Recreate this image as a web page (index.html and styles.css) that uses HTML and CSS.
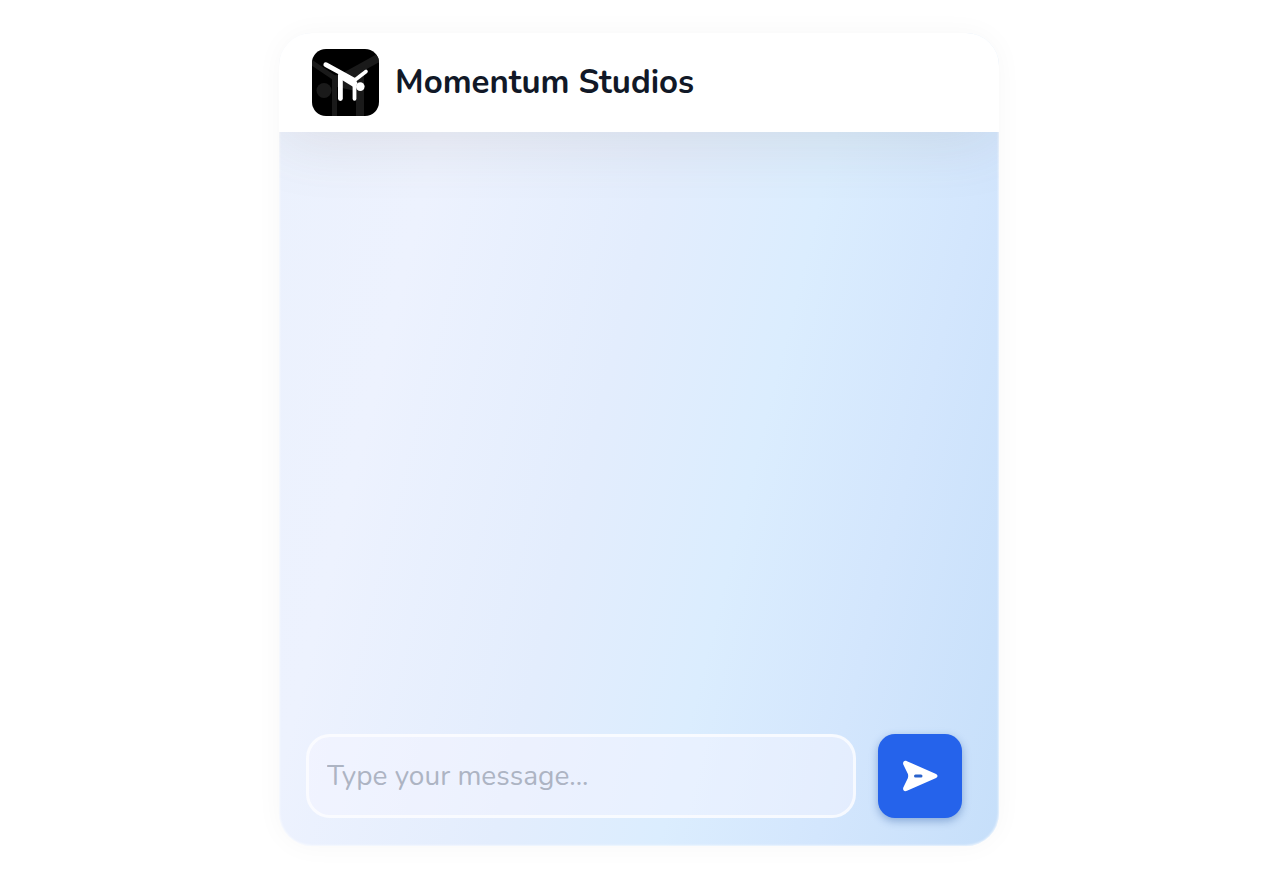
FILE: index.html
```html
<!DOCTYPE html>
<html lang="en">
<head>
<meta charset="utf-8">
<meta name="viewport" content="width=device-width, initial-scale=1">
<title>Momentum Studios</title>
<link rel="stylesheet" href="styles.css">
</head>
<body class="page">
<main class="chat">
  <header class="chat-header">
    <svg class="logo" viewBox="0 0 67 67" role="img" aria-label="Momentum Studios logo">
      <rect width="67" height="67" fill="#000"/>
      <g fill="none" stroke="#1a1a1a">
        <path d="M-2 12.500 L22.500 29 V69" stroke-width="5"/>
        <path d="M70 7 L30 29" stroke-width="8"/>
        <path d="M48 26 V69" stroke-width="8"/>
      </g>
      <path d="M20 27 L30 25 L50 18 L52 38 L44 42 L25 38Z" fill="#1a1a1a"/>
      <circle cx="12" cy="41.500" r="7.500" fill="#1a1a1a"/>
      <g fill="none" stroke="#fff" stroke-linecap="round" stroke-linejoin="round">
        <path d="M13.800 15.700 L42 31" stroke-width="4.800"/>
        <path d="M41 32.500 L54 22.500" stroke-width="3.600"/>
        <path d="M28.400 26 V49.500" stroke-width="4.800"/>
        <path d="M42.500 34 V49.800" stroke-width="3.800"/>
      </g>
      <path d="M26 22 L43 30 L45.500 34 L43 39 L30 31Z" fill="#fff"/>
      <circle cx="48.300" cy="37.600" r="4.300" fill="#fff"/>
    </svg>
    <h1 class="title">Momentum Studios</h1>
  </header>
  <section class="messages" aria-label="Messages"></section>
  <form class="composer">
    <input class="message-input" type="text" aria-label="Message" placeholder="Type your message...">
    <button class="send" type="button" aria-label="Send message">
      <svg class="send-icon" viewBox="0 0 36 32" aria-hidden="true">
        <path d="M1.300 4.500 C.4 1.500 2.500 0 5 1.200 L33.500 13.700 C36.200 15 36.200 17 33.500 18.300 L5 30.800 C2.500 32 .4 30.500 1.300 27.500 L5.800 18.200 Q6.600 16 5.800 13.800Z" fill="#fff"/>
        <path d="M13.500 16 H19" fill="none" stroke="#2a62cc" stroke-width="3" stroke-linecap="round"/>
      </svg>
    </button>
  </form>
</main>
</body>
</html>
```
FILE: styles.css
```css
* {
  box-sizing: border-box;
}

.page {
  margin: 0;
  min-height: 100vh;
  padding: 33px 24px 34px;
  display: flex;
  justify-content: center;
  background: #fff;
  font-family: Nunito, Lato, "Open Sans", sans-serif;
}

.chat {
  width: 100%;
  max-width: 720px;
  display: flex;
  flex-direction: column;
  overflow: hidden;
  border-radius: 33px;
  background: linear-gradient(104deg, #ebf1fd 0%, #edf2fe 20%, #e3edfd 45%, #dbedfe 63%, #d3e6fd 80%, #c6dffa 100%);
  box-shadow: inset 0 0 2px 1px rgba(255, 255, 255, 0.6), 0 0 28px rgba(0, 0, 0, 0.035);
}

.chat-header {
  display: flex;
  align-items: center;
  gap: 16px;
  padding: 16px 33px;
  background: #fff;
  box-shadow: 0 8px 64px rgba(110, 90, 70, 0.13);
}

.logo {
  width: 67px;
  height: 67px;
  flex: none;
  border-radius: 14px;
}

.title {
  margin: 0;
  color: #111827;
  font-size: 33px;
  line-height: 48px;
  font-weight: 700;
}

.messages {
  flex: 1;
}

.composer {
  display: flex;
  gap: 22px;
  padding: 24px 37px 28px 27px;
}

.message-input {
  flex: 1;
  min-width: 0;
  height: 84px;
  padding: 0 18px;
  border: 3px solid rgba(255, 255, 255, 0.7);
  border-radius: 24px;
  background: rgba(245, 245, 255, 0.5);
  color: #111827;
  font-family: inherit;
  font-size: 28px;
}

.message-input::placeholder {
  color: #adb4c3;
  opacity: 1;
}

.send {
  width: 84px;
  height: 84px;
  flex: none;
  display: grid;
  place-items: center;
  padding: 0;
  border: 0;
  border-radius: 17px;
  background: #2563eb;
  box-shadow: 0 3px 8px rgba(30, 80, 160, 0.4);
}

.send-icon {
  width: 36px;
  height: 32px;
}
```
